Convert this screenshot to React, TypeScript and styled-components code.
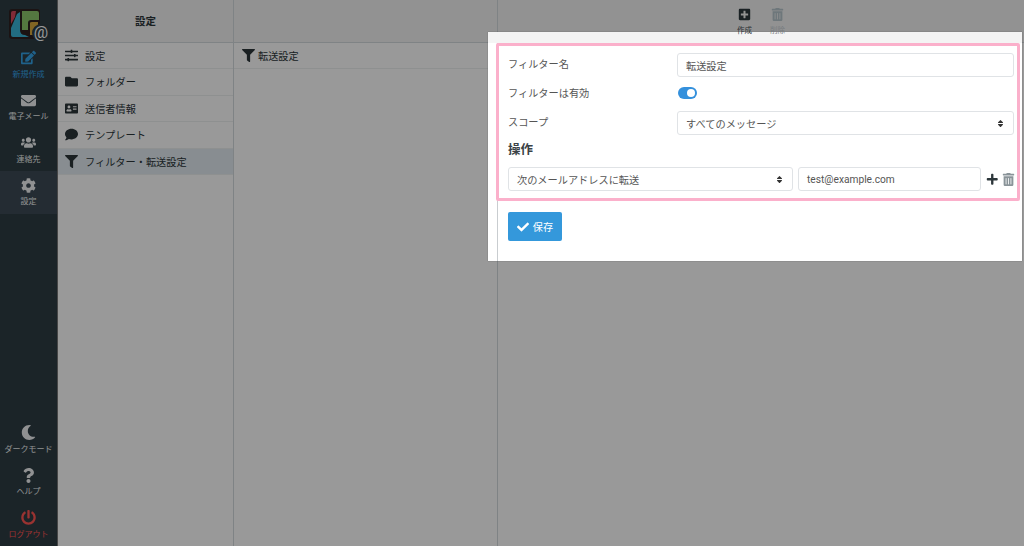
import React from "react";
import styled, { createGlobalStyle } from "styled-components";
import {
  FaAddressCard,
  FaCheck,
  FaCog,
  FaComment,
  FaEdit,
  FaEnvelope,
  FaFilter,
  FaFolder,
  FaMoon,
  FaPlus,
  FaPlusSquare,
  FaPowerOff,
  FaQuestion,
  FaSlidersH,
  FaSort,
  FaTrashAlt,
  FaUsers,
} from "react-icons/fa";

const GlobalStyle = createGlobalStyle`
  html, body {
    margin: 0;
    padding: 0;
    width: 1024px;
    height: 546px;
    overflow: hidden;
    font-family: Roboto, "Noto Sans CJK JP", sans-serif;
  }
`;

const Page = styled.div`
  position: relative;
  display: flex;
  width: 1024px;
  height: 546px;
  background: #fff;
  color: #2c363a;
  overflow: hidden;
`;

const Overlay = styled.div`
  position: absolute;
  inset: 0;
  background: rgba(0, 0, 0, 0.4);
`;

const Sidebar = styled.nav`
  width: 57px;
  flex: none;
  display: flex;
  flex-direction: column;
  background: #2d3c44;
  border-right: 1px solid #777;
`;

const Logo = styled.svg`
  display: block;
  margin: 9px 0 0 9px;
  width: 42px;
  height: 33px;
  flex: none;
`;

const MenuTop = styled.div`
  flex: 1;
  display: flex;
  flex-direction: column;
  padding-top: 1.5px;
`;

const MenuBottom = styled.div`
  display: flex;
  flex-direction: column;
`;

const MenuItem = styled.a<{ $tone?: "active" | "danger"; $selected?: boolean }>`
  height: 42.5px;
  display: flex;
  flex-direction: column;
  align-items: center;
  padding-top: 5px;
  box-sizing: border-box;
  background: ${(p) => (p.$selected ? "#3c4a55" : "transparent")};
  color: ${(p) =>
    p.$tone === "active" ? "#35a3e8" : p.$tone === "danger" ? "#ff5552" : "#f0f2f3"};
  svg {
    font-size: 15px;
    margin: 1.5px 0;
  }
  span {
    margin-top: 2px;
    font-size: 8px;
    line-height: 12px;
    white-space: nowrap;
  }
`;

const Column = styled.section<{ $width: number }>`
  width: ${(p) => p.$width}px;
  flex: none;
  box-sizing: border-box;
  border-right: 1px solid #d4dbde;
  background: #fff;
`;

const Main = styled.section`
  flex: 1;
  background: #fff;
`;

const Header = styled.header`
  height: 42.5px;
  box-sizing: border-box;
  border-bottom: 1px solid #d4dbde;
  background: #f4f4f4;
  display: flex;
  align-items: center;
  justify-content: center;
  font-size: 10.5px;
  font-weight: 700;
  color: #2c363a;
`;

const ListItem = styled.div<{ $selected?: boolean }>`
  height: 26.5px;
  box-sizing: border-box;
  display: flex;
  align-items: center;
  padding-left: 7px;
  gap: 7px;
  border-bottom: 1px solid #edf0f1;
  background: ${(p) => (p.$selected ? "#e3ecf2" : "transparent")};
  font-size: 10.2px;
  color: #2c363a;
  white-space: nowrap;
  svg {
    width: 13px;
    font-size: 13px;
    flex: none;
  }
`;

const DetailItem = styled(ListItem)`
  padding-left: 8px;
  gap: 3px;
`;

/* sits above the dialog: its labels run over the dialog's top edge */
const Toolbar = styled.div`
  position: relative;
  z-index: 2;
  align-self: flex-start;
  display: flex;
  gap: 13px;
  padding-top: 8px;
`;

const ToolButton = styled.div<{ $disabled?: boolean }>`
  width: 20px;
  display: flex;
  flex-direction: column;
  align-items: center;
  font-weight: 400;
  color: ${(p) => (p.$disabled ? "#6e777b" : "#1a2124")};
  svg {
    font-size: 13px;
  }
  span {
    margin-top: 4px;
    font-size: 7.5px;
    line-height: 11px;
    white-space: nowrap;
    color: ${(p) => (p.$disabled ? "#777c7f" : "#2a2f32")};
  }
`;

const Dialog = styled.div`
  position: absolute;
  left: 488px;
  top: 32px;
  width: 533.5px;
  height: 229px;
  background: #fff;
  box-shadow: 0 0 1px rgba(0, 0, 0, 0.4);
  color: #555;
  display: flex;
  flex-direction: column;
`;

const DialogStrip = styled.div`
  height: 11px;
  flex: none;
  background: #f4f4f4;
`;

const DialogBody = styled.div`
  flex: 1;
  margin-left: 9px;
  border-left: 1px solid #c9cdd0;
`;

const Highlight = styled.div`
  margin: 0 2px 0 -2px;
  height: 158px;
  box-sizing: border-box;
  border: 3px solid #fbb0cb;
  border-radius: 2px;
  padding: 7px 2.5px 0 9px;
  display: flex;
  flex-direction: column;
`;

const Row = styled.div<{ $height: number }>`
  display: grid;
  grid-template-columns: 169px 1fr;
  align-items: center;
  height: ${(p) => p.$height}px;
  font-size: 10.2px;
  color: #555;
`;

const Label = styled.label`
  padding-bottom: 4px;
`;

const Field = styled.div`
  height: 24px;
  box-sizing: border-box;
  border: 1px solid #e0e3e6;
  border-radius: 3px;
  display: flex;
  align-items: center;
  justify-content: space-between;
  padding: 0 8px;
  font-size: 10.2px;
  color: #555;
  background: #fff;
  svg {
    font-size: 9px;
    color: #333;
  }
`;

const Toggle = styled.div`
  position: relative;
  width: 19px;
  height: 12px;
  border-radius: 6px;
  background: #3490dc;
  margin: 0 0 2px 1px;
  &::after {
    content: "";
    position: absolute;
    right: 2px;
    top: 2px;
    width: 8px;
    height: 8px;
    border-radius: 50%;
    background: #fff;
  }
`;

const SectionTitle = styled.h3`
  margin: 6px 0 0;
  font-size: 12.5px;
  line-height: 18px;
  font-weight: 700;
  color: #3a4246;
`;

const ActionRow = styled.div`
  display: flex;
  align-items: center;
  margin-top: 8px;
  gap: 5px;
`;

const ActionSelect = styled(Field)`
  width: 285px;
  flex: none;
`;

const ActionInput = styled(Field)`
  width: 183px;
  flex: none;
`;

const ActionIcons = styled.div`
  display: flex;
  align-items: center;
  gap: 3.5px;
`;

const AddIcon = styled(FaPlus)`
  font-size: 12.5px;
  color: #2c363a;
`;

const RemoveIcon = styled(FaTrashAlt)`
  font-size: 13px;
  color: #8a9499;
`;

const SaveButton = styled.button`
  margin: 11px 0 0 10px;
  width: 54px;
  height: 29px;
  border: 0;
  border-radius: 2px;
  background: #3498db;
  color: #fff;
  display: flex;
  align-items: center;
  justify-content: center;
  gap: 4px;
  font-family: inherit;
  font-size: 10.2px;
  padding: 0;
  svg {
    font-size: 12px;
  }
`;

export default function App() {
  return (
    <Page>
      <GlobalStyle />
      <Sidebar>
        <Logo viewBox="0 0 42 33">
          <rect x="0" y="0" width="31" height="30" rx="3" fill="#2e2020" />
          <path d="M2 4 Q2 2 4 2 H7 L6 8 L2 15 Z" fill="#d8485c" />
          <path d="M8 5 L11 3 V21 Q11 26 16 26 L20 28 H4 Q2 28 2 26 V19 Z" fill="#3ab4d8" />
          <path d="M13 2 H28 Q30 2 30 4 V11 H22 Q19 11 19 14 V21 H13 Z" fill="#8cc66c" />
          <path d="M21 14 Q21 13 23 13 H29 V26 H21 Z" fill="#d9a93c" />
          <circle cx="32" cy="24" r="9" fill="#2d3c44" />
          <text x="32" y="29" fontSize="16" textAnchor="middle" fill="#fff" fontFamily="Roboto, sans-serif">
            @
          </text>
        </Logo>
        <MenuTop>
          <MenuItem $tone="active">
            <FaEdit />
            <span>新規作成</span>
          </MenuItem>
          <MenuItem>
            <FaEnvelope />
            <span>電子メール</span>
          </MenuItem>
          <MenuItem>
            <FaUsers />
            <span>連絡先</span>
          </MenuItem>
          <MenuItem $selected>
            <FaCog />
            <span>設定</span>
          </MenuItem>
        </MenuTop>
        <MenuBottom>
          <MenuItem>
            <FaMoon />
            <span>ダークモード</span>
          </MenuItem>
          <MenuItem>
            <FaQuestion />
            <span>ヘルプ</span>
          </MenuItem>
          <MenuItem $tone="danger">
            <FaPowerOff />
            <span>ログアウト</span>
          </MenuItem>
        </MenuBottom>
      </Sidebar>

      <Column $width={176}>
        <Header>設定</Header>
        <ListItem>
          <FaSlidersH />
          設定
        </ListItem>
        <ListItem>
          <FaFolder />
          フォルダー
        </ListItem>
        <ListItem>
          <FaAddressCard />
          送信者情報
        </ListItem>
        <ListItem>
          <FaComment />
          テンプレート
        </ListItem>
        <ListItem $selected>
          <FaFilter />
          フィルター・転送設定
        </ListItem>
      </Column>

      <Column $width={264}>
        <Header />
        <DetailItem>
          <FaFilter />
          転送設定
        </DetailItem>
      </Column>

      <Main>
        <Header>
          <Toolbar>
            <ToolButton>
              <FaPlusSquare />
              <span>作成</span>
            </ToolButton>
            <ToolButton $disabled>
              <FaTrashAlt />
              <span>削除</span>
            </ToolButton>
          </Toolbar>
        </Header>
      </Main>

      <Overlay />

      <Dialog>
        <DialogStrip />
        <DialogBody>
          <Highlight>
            <Row $height={24}>
              <Label>フィルター名</Label>
              <Field>転送設定</Field>
            </Row>
            <Row $height={34}>
              <Label>フィルターは有効</Label>
              <Toggle />
            </Row>
            <Row $height={24}>
              <Label>スコープ</Label>
              <Field>
                すべてのメッセージ
                <FaSort />
              </Field>
            </Row>
            <SectionTitle>操作</SectionTitle>
            <ActionRow>
              <ActionSelect>
                次のメールアドレスに転送
                <FaSort />
              </ActionSelect>
              <ActionInput>test@example.com</ActionInput>
              <ActionIcons>
                <AddIcon />
                <RemoveIcon />
              </ActionIcons>
            </ActionRow>
          </Highlight>
          <SaveButton>
            <FaCheck />
            保存
          </SaveButton>
        </DialogBody>
      </Dialog>
    </Page>
  );
}
